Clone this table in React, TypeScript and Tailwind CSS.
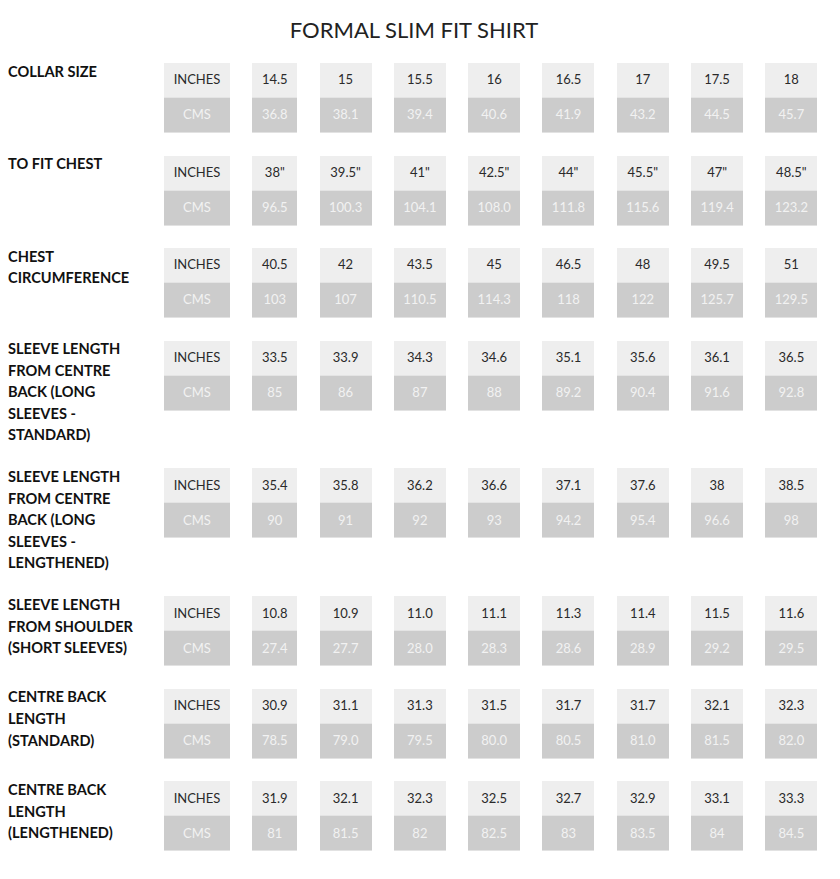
const columns = [
  "INCHES",
  "c1",
  "c2",
  "c3",
  "c4",
  "c5",
  "c6",
  "c7",
  "c8",
];

const widths = ["w-[66px]", "w-[45px]", "w-[52px]", "w-[52px]", "w-[52px]", "w-[52px]", "w-[52px]", "w-[52px]", "w-[52px]"];

type SizeRow = {
  label: string;
  inches: string[];
  cms: string[];
};

const rows: SizeRow[] = [
  {
    label: "COLLAR SIZE",
    inches: ["14.5", "15", "15.5", "16", "16.5", "17", "17.5", "18"],
    cms: ["36.8", "38.1", "39.4", "40.6", "41.9", "43.2", "44.5", "45.7"],
  },
  {
    label: "TO FIT CHEST",
    inches: ['38"', '39.5"', '41"', '42.5"', '44"', '45.5"', '47"', '48.5"'],
    cms: ["96.5", "100.3", "104.1", "108.0", "111.8", "115.6", "119.4", "123.2"],
  },
  {
    label: "CHEST CIRCUMFERENCE",
    inches: ["40.5", "42", "43.5", "45", "46.5", "48", "49.5", "51"],
    cms: ["103", "107", "110.5", "114.3", "118", "122", "125.7", "129.5"],
  },
  {
    label: "SLEEVE LENGTH FROM CENTRE BACK (LONG SLEEVES - STANDARD)",
    inches: ["33.5", "33.9", "34.3", "34.6", "35.1", "35.6", "36.1", "36.5"],
    cms: ["85", "86", "87", "88", "89.2", "90.4", "91.6", "92.8"],
  },
  {
    label: "SLEEVE LENGTH FROM CENTRE BACK (LONG SLEEVES - LENGTHENED)",
    inches: ["35.4", "35.8", "36.2", "36.6", "37.1", "37.6", "38", "38.5"],
    cms: ["90", "91", "92", "93", "94.2", "95.4", "96.6", "98"],
  },
  {
    label: "SLEEVE LENGTH FROM SHOULDER (SHORT SLEEVES)",
    inches: ["10.8", "10.9", "11.0", "11.1", "11.3", "11.4", "11.5", "11.6"],
    cms: ["27.4", "27.7", "28.0", "28.3", "28.6", "28.9", "29.2", "29.5"],
  },
  {
    label: "CENTRE BACK LENGTH (STANDARD)",
    inches: ["30.9", "31.1", "31.3", "31.5", "31.7", "31.7", "32.1", "32.3"],
    cms: ["78.5", "79.0", "79.5", "80.0", "80.5", "81.0", "81.5", "82.0"],
  },
  {
    label: "CENTRE BACK LENGTH (LENGTHENED)",
    inches: ["31.9", "32.1", "32.3", "32.5", "32.7", "32.9", "33.1", "33.3"],
    cms: ["81", "81.5", "82", "82.5", "83", "83.5", "84", "84.5"],
  },
];

function Row({ row }: { row: SizeRow }) {
  const top = ["INCHES", ...row.inches];
  const bottom = ["CMS", ...row.cms];

  return (
    <div className="flex items-start pb-5">
      <div className="w-[164px] shrink-0 pl-2 pr-[22px] text-[14.6px] leading-[21.6px] font-bold text-[#111]">
        {row.label}
      </div>
      <div className="mt-[2.5px] flex gap-[22.3px]">
        {columns.map((_, i) => (
          <div key={i} className={`${widths[i]} flex flex-col text-[13px]`}>
            <div className="h-[35px] flex items-center justify-center bg-[#eeeeee] text-[#2a2a2a] border-b border-[#e4e4e4]">
              {top[i]}
            </div>
            <div className="h-[35px] flex items-center justify-center bg-[#cccccc] text-[#f2f2f2] border-b border-[#e2e2e2]">
              {bottom[i]}
            </div>
          </div>
        ))}
      </div>
    </div>
  );
}

export default function App() {
  return (
    <div className="w-[828px] bg-white font-['Lato',sans-serif]">
      <h1 className="pt-[15px] pb-[15.5px] text-center text-[22px] leading-[30px] text-[#222]">
        FORMAL SLIM FIT SHIRT
      </h1>
      {rows.map((row) => (
        <Row key={row.label} row={row} />
      ))}
    </div>
  );
}
